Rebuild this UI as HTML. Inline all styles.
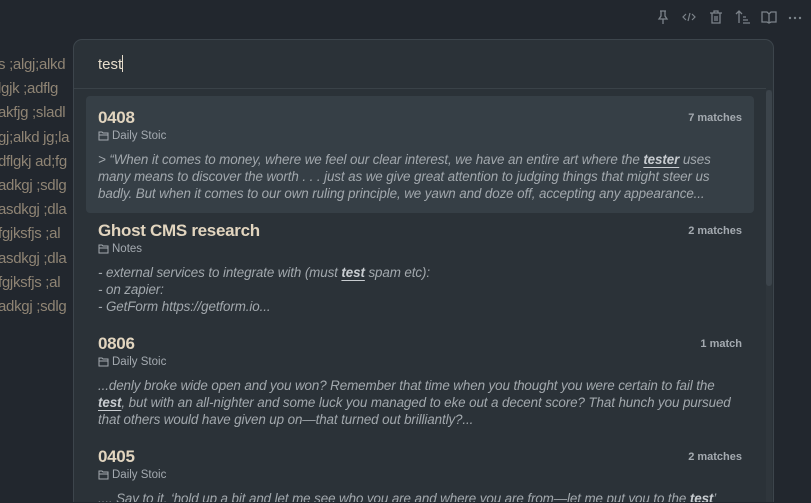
<!DOCTYPE html>
<html style="height:503px;overflow:hidden"><head><meta charset="utf-8"><style>
body{margin:0;width:811px;height:503px;background:#22272e;overflow:hidden;font-family:"Liberation Sans",sans-serif;position:relative}
.bg{position:absolute;left:-2px;color:#8f8474;font-size:15px;line-height:24.2px;top:53px;white-space:nowrap;letter-spacing:-0.3px}
.icons{position:absolute;top:9px;left:653px;color:#7c838a}
.icons svg{position:absolute;top:0}
.modal{position:absolute;left:73px;top:39px;width:699px;height:462px;background:#2b3238;border:1px solid #3d454c;border-bottom:none;border-radius:9px 9px 0 0;overflow:hidden}
.inp{position:absolute;left:24px;top:15px;color:#e6dccb;font-size:15px}
.inp span{display:inline-block;width:1px;height:17px;background:#e6dccb;vertical-align:-3px}
.div{position:absolute;left:0;top:48px;width:692px;height:1px;background:#3a4248}
.sb{position:absolute;left:692px;top:50px;width:6px;height:430px;background:#2f363c}
.sb div{width:6px;height:196px;background:#3c444b;border-radius:3px}
.item{position:absolute;left:12px;width:644px;padding:0 12px;height:117px}
.sel{background:#363f46;border-radius:4px}
.t{position:absolute;left:12px;top:12px;color:#e2d5bf;font-size:17px;font-weight:bold;letter-spacing:-0.3px}
.m{position:absolute;right:12px;top:16px;color:#a4aab0;font-size:11px;font-weight:bold}
.f{position:absolute;left:12px;top:34px;color:#a4aab0;font-size:11.5px}
.f svg{vertical-align:-2px;margin-right:3px}
.b{position:absolute;left:12px;top:55px;width:636px;color:#a2a8ad;font-size:13.4px;font-style:italic;line-height:17px;letter-spacing:-0.1px}
.b b{color:#c8ccd0;text-decoration:underline;text-underline-offset:3px}
</style></head><body>
<div class="bg">s ;algj;alkd<br>lgjk ;adflg<br>akfjg ;sladl<br>gj;alkd jg;la<br>dflgkj ad;fg<br>adkgj ;sdlg<br>asdkgj ;dla<br>fgjksfjs ;al<br>asdkgj ;dla<br>fgjksfjs ;al<br>adkgj ;sdlg</div>
<div class="icons">
<svg style="left:3px" width="14" height="16" viewBox="0 0 14 16" fill="none" stroke="currentColor" stroke-width="1.3"><path d="M4 2h6M5 2v5l-2 3h8l-2-3V2M7 10v5"/></svg>
<svg style="left:28px" width="16" height="16" viewBox="0 0 16 16" fill="none" stroke="currentColor" stroke-width="1.2"><path d="M5 5l-3 3 3 3M11 5l3 3-3 3M9 4l-2 8"/></svg>
<svg style="left:56px" width="14" height="16" viewBox="0 0 14 16" fill="none" stroke="currentColor" stroke-width="1.3"><path d="M1 4h12M5 4V2h4v2M3 4v10h8V4M6 7v5M8 7v5"/></svg>
<svg style="left:82px" width="16" height="16" viewBox="0 0 16 16" fill="none" stroke="currentColor" stroke-width="1.3"><path d="M4 14V2M1 5l3-3 3 3M8 8h3M8 11h5M8 14h7"/></svg>
<svg style="left:108px" width="16" height="16" viewBox="0 0 16 16" fill="none" stroke="currentColor" stroke-width="1.3"><path d="M1 3h5l2 2 2-2h5v10h-5l-2 1-2-1H1zM8 5v9"/></svg>
<svg style="left:135px" width="14" height="16" viewBox="0 0 14 16" fill="currentColor"><circle cx="2" cy="9" r="1.2"/><circle cx="7" cy="9" r="1.2"/><circle cx="12" cy="9" r="1.2"/></svg>
</div>
<div class="modal">
<div class="inp">test<span></span></div>
<div class="div"></div>
<div class="sb"><div></div></div>
<div class="item sel" style="top:56px"><div class="t">0408</div><div class="m">7 matches</div><div class="f"><svg width="11" height="11" viewBox="0 0 11 11" fill="none" stroke="#a4aab0"><path d="M1 2h3l1 1h5v7H1z M1 5h9"/></svg>Daily Stoic</div><div class="b">&gt; “When it comes to money, where we feel our clear interest, we have an entire art where the <b>tester</b> uses many means to discover the worth . . . just as we give great attention to judging things that might steer us badly. But when it comes to our own ruling principle, we yawn and doze off, accepting any appearance...</div></div>
<div class="item" style="top:169px"><div class="t">Ghost CMS research</div><div class="m">2 matches</div><div class="f"><svg width="11" height="11" viewBox="0 0 11 11" fill="none" stroke="#a4aab0"><path d="M1 2h3l1 1h5v7H1z M1 5h9"/></svg>Notes</div><div class="b">- external services to integrate with (must <b>test</b> spam etc):<br>- on zapier:<br>- GetForm https://getform.io...</div></div>
<div class="item" style="top:282px"><div class="t">0806</div><div class="m">1 match</div><div class="f"><svg width="11" height="11" viewBox="0 0 11 11" fill="none" stroke="#a4aab0"><path d="M1 2h3l1 1h5v7H1z M1 5h9"/></svg>Daily Stoic</div><div class="b">...denly broke wide open and you won? Remember that time when you thought you were certain to fail the <b>test</b>, but with an all-nighter and some luck you managed to eke out a decent score? That hunch you pursued that others would have given up on—that turned out brilliantly?...</div></div>
<div class="item" style="top:395px;height:67px;overflow:hidden"><div class="t">0405</div><div class="m">2 matches</div><div class="f"><svg width="11" height="11" viewBox="0 0 11 11" fill="none" stroke="#a4aab0"><path d="M1 2h3l1 1h5v7H1z M1 5h9"/></svg>Daily Stoic</div><div class="b">.... Say to it, ‘hold up a bit and let me see who you are and where you are from—let me put you to the <b>test</b>’</div></div>
</div>
</body></html>
